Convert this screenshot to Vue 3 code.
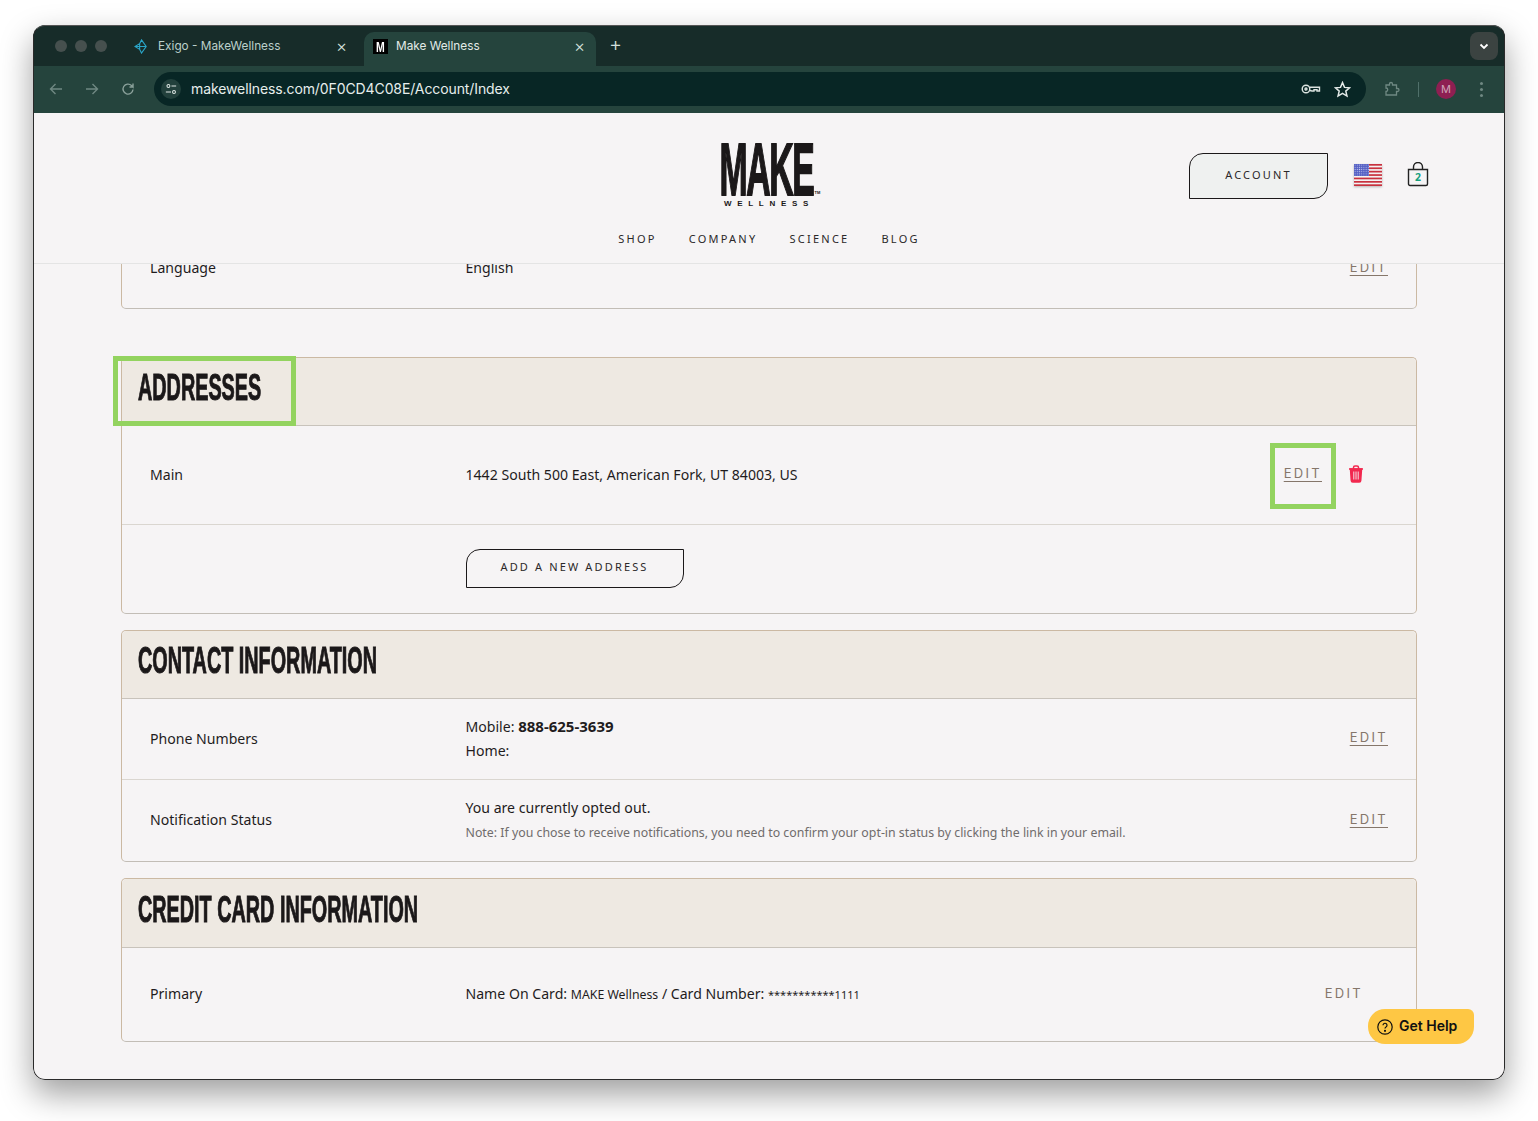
<template>
  <div class="window">
    <div class="tabstrip">
      <div class="lights"><i></i><i></i><i></i></div>
      <div class="tab">
        <svg class="exigo" viewBox="0 0 16 16" width="15" height="15" fill="none" stroke="#2aa5c8" stroke-width="1.2">
          <path d="M8 1 L13 8 L8 15 L6 11 L1 8 L6 5 Z M6 5 V11 M1 8 H13" />
        </svg>
        <span class="tab-title">Exigo - MakeWellness</span>
        <span class="close">×</span>
      </div>
      <div class="tab active">
        <span class="favicon"><b>M</b></span>
        <span class="tab-title">Make Wellness</span>
        <span class="close">×</span>
      </div>
      <span class="plus">+</span>
      <div class="tab-search">
        <svg viewBox="0 0 12 12" width="12" height="12" fill="none" stroke="#fff" stroke-width="1.8"><path d="M2.500 4.500 6 8l3.500-3.500" /></svg>
      </div>
    </div>

    <div class="toolbar">
      <svg class="nav-ic" viewBox="0 0 16 16" width="16" height="16" fill="none" stroke="#6f8882" stroke-width="1.4"><path d="M14 8H2.500M7.500 3 2.500 8l5 5" /></svg>
      <svg class="nav-ic" viewBox="0 0 16 16" width="16" height="16" fill="none" stroke="#6f8882" stroke-width="1.4"><path d="M2 8h11.500M8.500 3l5 5-5 5" /></svg>
      <svg class="nav-ic" viewBox="0 0 16 16" width="16" height="16" fill="none" stroke="#8aa09a" stroke-width="1.400"><path d="M13 8.500A5 5 0 1 1 11.500 4.500L13 6V2.500M13 6H9.500" /></svg>
      <div class="omnibox">
        <span class="site-btn">
          <svg viewBox="0 0 14 14" width="14" height="14" fill="none" stroke="#dfe8e5" stroke-width="1.200"><circle cx="4" cy="3.500" r="1.700" /><path d="M7.500 3.500H13M1 10.500h6" /><circle cx="10.500" cy="10.500" r="1.700" /></svg>
        </span>
        <span class="url">makewellness.com/0F0CD4C08E/Account/Index</span>
        <svg class="omni-ic" viewBox="0 0 20 12" width="20" height="12" fill="none" stroke="#dbe3e0" stroke-width="1.400"><circle cx="5" cy="6" r="3.800" /><circle cx="5" cy="6" r="1" /><path d="M8.800 4.200H18.500V8H16V6.800H13V8H11L8.800 7.500" /></svg>
        <svg class="omni-ic star" viewBox="0 0 16 16" width="17" height="17" fill="none" stroke="#e4eae8" stroke-width="1.400"><path d="M8 1.500 9.900 6l4.800.4-3.600 3.100 1.100 4.700L8 11.700l-4.200 2.500 1.100-4.700L1.300 6.400 6.100 6Z" /></svg>
      </div>
      <svg class="ext" viewBox="0 0 16 16" width="16" height="16" fill="none" stroke="#6f8882" stroke-width="1.300"><path d="M2 4h3.500V3a1.500 1.500 0 0 1 3 0v1H12.500v3.500h1a1.500 1.500 0 0 1 0 3h-1V14H2v-3.500a1.700 1.700 0 0 0 0-3.500Z" /></svg>
      <i class="sep"></i>
      <span class="avatar">M</span>
      <span class="menu"><i></i><i></i><i></i></span>
    </div>

    <div class="page">
      <header class="site-header">
        <div class="logo">
          <span class="logo-make">MAKE</span>
          <span class="logo-tm">TM</span>
          <span class="logo-sub">WELLNESS</span>
        </div>
        <nav class="site-nav">
          <a>SHOP</a><a>COMPANY</a><a>SCIENCE</a><a>BLOG</a>
        </nav>
        <div class="header-tools">
          <button class="btn account">ACCOUNT</button>
          <svg class="flag" viewBox="0 0 28 22" width="28" height="22">
            <defs>
              <pattern id="stars" width="2.200" height="2.200" patternUnits="userSpaceOnUse">
                <circle cx="1.100" cy="1.100" r=".55" fill="#c9cdf0" />
              </pattern>
            </defs>
            <rect width="28" height="22" fill="#f4f1f1" />
            <rect v-for="y in stripes" :key="y" y="0" width="28" height="1.700" :transform="`translate(0 ${y})`" fill="#c8313e" />
            <rect width="15" height="12" fill="#5560c4" />
            <rect width="15" height="12" fill="url(#stars)" />
          </svg>
          <div class="bag">
            <svg viewBox="0 0 22 25" width="22" height="25" fill="none" stroke="#222" stroke-width="1.400"><path d="M1.500 7.500h19V22a1.500 1.500 0 0 1-1.500 1.500H3A1.500 1.500 0 0 1 1.500 22ZM6.500 7.500V5a4.500 4.500 0 0 1 9 0v2.500" /></svg>
            <span class="bag-count">2</span>
          </div>
        </div>
      </header>

      <main class="content">
        <div class="content-inner">
          <section class="card first">
            <div class="row lang">
              <span>Language</span>
              <span>English</span>
              <a class="edit">EDIT</a>
            </div>
          </section>

          <section class="card addresses">
            <div class="card-head">
              <h2>ADDRESSES</h2>
              <i class="mark mark-head"></i>
            </div>
            <div class="row address">
              <span>Main</span>
              <span>1442 South 500 East, American Fork, UT 84003, US</span>
              <div class="actions">
                <a class="edit marked">EDIT<i class="mark mark-edit"></i></a>
                <svg class="trash" viewBox="0 0 16 18" width="16" height="18" fill="none" stroke="#f2284f" stroke-width="1.500">
                  <path d="M1 4h14M5.500 4V2.500a1.500 1.500 0 0 1 1.500-1.500h2a1.500 1.500 0 0 1 1.500 1.500V4" />
                  <path d="M2.500 4 3.300 15.500A1.500 1.500 0 0 0 4.800 17h6.400a1.500 1.500 0 0 0 1.500-1.500L13.500 4Z" fill="#f2284f" />
                  <path d="M5.800 6.500v8M8 6.500v8M10.200 6.500v8" stroke="#f6f4f5" stroke-width=".9" />
                </svg>
              </div>
            </div>
            <div class="row add-row">
              <span></span>
              <button class="btn add">ADD A NEW ADDRESS</button>
            </div>
          </section>

          <section class="card contact">
            <div class="card-head"><h2>CONTACT INFORMATION</h2></div>
            <div class="row phones">
              <span>Phone Numbers</span>
              <div class="stack">
                <span>Mobile: <b>888-625-3639</b></span>
                <span>Home:</span>
              </div>
              <a class="edit">EDIT</a>
            </div>
            <div class="row notify">
              <span>Notification Status</span>
              <div class="stack">
                <span>You are currently opted out.</span>
                <small>Note: If you chose to receive notifications, you need to confirm your opt-in status by clicking the link in your email.</small>
              </div>
              <a class="edit">EDIT</a>
            </div>
          </section>

          <section class="card credit">
            <div class="card-head"><h2>CREDIT CARD INFORMATION</h2></div>
            <div class="row primary">
              <span>Primary</span>
              <span>Name On Card: <em>MAKE Wellness</em> / Card Number: <em class="masked">***********1111</em></span>
              <a class="edit plain">EDIT</a>
            </div>
          </section>
        </div>
      </main>

      <button class="help">
        <svg viewBox="0 0 16 16" width="16" height="16" fill="none" stroke="#111" stroke-width="1.200"><circle cx="8" cy="8" r="7.200" /><path d="M6 6.200a2 2 0 1 1 3 1.800c-.7.400-1 .8-1 1.600" /><circle cx="8" cy="11.800" r=".5" fill="#111" /></svg>
        <span class="help-label">Get Help</span>
      </button>
    </div>
  </div>
</template>

<script setup>
const stripes = [0, 3.4, 6.8, 10.2, 13.6, 17, 20.3]
</script>

<style>
html, body { margin: 0; background: #fff; }
</style>

<style scoped>
.window {
  box-sizing: border-box;
  position: relative;
  width: 1472px;
  height: 1055px;
  margin: 25px 0 41px 33px;
  border-radius: 12px;
  overflow: hidden;
  box-shadow: 0 14px 32px rgba(0, 0, 0, .38);
  display: flex;
  flex-direction: column;
  font-family: "Noto Sans", sans-serif;
  background: #f6f4f5;
}
.window::after {
  content: "";
  position: absolute;
  inset: 0;
  border: 1px solid #2a2a2a;
  border-top-color: #555;
  border-radius: 12px;
  pointer-events: none;
  z-index: 5;
}
.tabstrip {
  height: 41px;
  flex: none;
  background: #172c29;
  display: flex;
  align-items: flex-end;
  position: relative;
  font-family: "Inter", sans-serif;
}
.lights { display: flex; gap: 8px; padding: 0 0 14px 22px; width: 75px; }
.lights i { width: 12px; height: 12px; border-radius: 50%; background: #46504e; flex: none; }
.tab {
  width: 234px;
  height: 34px;
  box-sizing: border-box;
  display: flex;
  align-items: center;
  gap: 9px;
  padding: 0 17px 6px 4px;
  color: #bcd0cb;
  font-size: 11.800px;
  border-radius: 10px 10px 0 0;
}
.tab.active { width: 232px; padding: 0 11px 6px 9px; gap: 8px; background: #25443d; color: #e2ebe8; }
.exigo { flex: none; }
.favicon {
  width: 15px; height: 15px; background: #000; color: #fff; flex: none;
  display: flex; align-items: center; justify-content: center;
  font: bold 15px "Liberation Sans Narrow", "Liberation Sans", sans-serif;
}
.favicon b { transform: scaleX(.7); }
.tab-title { flex: 1; white-space: nowrap; }
.close { font-size: 17px; line-height: 1; font-weight: 300; color: #d5e0dd; }
.plus { color: #d5e0dd; font-size: 20px; line-height: 28px; padding-bottom: 8px; margin-left: 13px; font-weight: 300; }
.tab-search {
  position: absolute; right: 7px; top: 7px; width: 28px; height: 28px; border-radius: 8px;
  background: #3b4341; display: flex; align-items: center; justify-content: center;
}
.toolbar {
  height: 47px;
  flex: none;
  background: #25443d;
  display: flex;
  align-items: center;
  padding: 0 0 1px 15px;
  box-sizing: border-box;
}
.nav-ic { flex: none; margin-right: 20px; }
.omnibox {
  width: 1212px;
  height: 34px;
  flex: none;
  margin-left: -2px;
  border-radius: 17px;
  background: #082625;
  display: flex;
  align-items: center;
  padding: 0 15px 0 7px;
  box-sizing: border-box;
}
.site-btn {
  width: 20px; height: 20px; border-radius: 50%; background: #22403c;
  display: flex; align-items: center; justify-content: center; margin-right: 10px;
}
.site-btn svg { width: 12px; height: 12px; }
.url { flex: 1; color: #e6eeec; font-size: 14px; font-family: "Inter", sans-serif; letter-spacing: -.1px; padding-bottom: 2px; }
.omni-ic { flex: none; }
.star { margin-left: 13px; }
.ext { margin-left: 18px; flex: none; }
.sep { width: 1px; height: 15px; background: #50706a; margin-left: 18px; }
.avatar {
  width: 20px; height: 20px; border-radius: 50%; background: #8e1f52; color: #cfa5b8;
  font: 11px/20px "Inter", sans-serif; text-align: center; margin-left: 17px; flex: none;
}
.menu { display: flex; flex-direction: column; gap: 3px; margin-left: 24px; }
.menu i { width: 3px; height: 3px; border-radius: 50%; background: #6f8882; }

.page { flex: 1; min-height: 0; display: flex; flex-direction: column; position: relative; }
.site-header {
  height: 151px;
  flex: none;
  box-sizing: border-box;
  border-bottom: 1px solid #e4e4e4;
  position: relative;
  display: flex;
  flex-direction: column;
  align-items: center;
  padding-top: 30px;
  background: #f6f4f5;
  z-index: 2;
  color: #1b1819;
}
.logo { display: flex; flex-direction: column; align-items: center; height: 65px; margin-left: -5px; position: relative; }
.logo-make {
  font: bold 75px/52px "Liberation Sans", sans-serif;
  height: 52px;
  transform: scaleX(.45);
  letter-spacing: -3px;
  -webkit-text-stroke: 1.800px #1b1819;
}
.logo-tm {
  position: absolute;
  left: calc(50% + 48px);
  top: 47px;
  font: bold 4px/5px "Liberation Sans", sans-serif;
}
.logo-sub { font: bold 8px/10px "Liberation Sans", sans-serif; letter-spacing: 5.700px; margin-top: 4px; padding-left: 5px; }
.site-nav {
  display: flex;
  gap: 32px;
  margin-top: 23px;
  font-size: 11px;
  line-height: 16px;
  letter-spacing: 2.250px;
  color: #2b2829;
}
.header-tools {
  position: absolute;
  left: 1156px;
  top: 40px;
  display: flex;
  align-items: center;
}
.btn {
  font-family: "Noto Sans", sans-serif;
  font-size: 11px;
  letter-spacing: 2.150px;
  color: #2b2829;
  border: 1px solid #1b1819;
  border-radius: 14px 0 14px 0;
  background: transparent;
  padding: 0 0 3px;
}
.account { width: 139px; height: 46px; background: #eff1f0; }
.flag { margin: 0 0 3px 26px; filter: drop-shadow(0 1px 1px rgba(0,0,0,.25)); }
.bag { position: relative; margin: 0 0 4px 25px; width: 22px; height: 25px; }
.bag-count {
  position: absolute; left: 0; right: 0; top: 9px; text-align: center;
  font: bold 10.500px/12px "Noto Sans", sans-serif; color: #16a07d;
}
.content { flex: 1; min-height: 0; overflow: hidden; }
.content-inner { margin-top: -100px; display: flex; flex-direction: column; align-items: center; }
.card {
  width: 1296px;
  box-sizing: border-box;
  border: 1px solid #cbb9a3;
  border-bottom-color: #c2bdb6;
  border-radius: 5px;
  margin-top: 16px;
}
.card.first { margin-top: 0; height: 145px; display: flex; align-items: flex-end; padding-bottom: 29px; }
.card.first .row { flex: 1; height: auto; }
.card.addresses { margin-top: 48px; }
.card-head {
  height: 68px;
  box-sizing: border-box;
  background: #eee9e2;
  border-bottom: 1px solid #c8c3bb;
  border-radius: 5px 5px 0 0;
  padding: 0 0 7px 16px;
  position: relative;
  display: flex;
  align-items: center;
}
.credit .card-head { height: 69px; }
h2 {
  margin: 0;
  font: bold 36px/1 "Liberation Sans Narrow", "Liberation Sans", sans-serif;
  color: #1b1819;
  transform: scaleX(.55);
  transform-origin: left center;
  -webkit-text-stroke: 1px #1b1819;
  white-space: nowrap;
}
.mark { position: absolute; border: 5px solid #93d35f; box-sizing: border-box; pointer-events: none; }
.mark-head { left: -9px; top: -2px; width: 183px; height: 70px; }
.row {
  display: grid;
  grid-template-columns: 315.500px 1fr auto;
  align-items: center;
  box-sizing: border-box;
  padding: 0 28px 2px;
  font-size: 14.100px;
  color: #1f1c1d;
  border-bottom: 1px solid #dad6d0;
}
.row:last-child { border-bottom: none; }
.address { height: 99px; }
.add-row { height: 88px; }
.phones { height: 81px; }
.notify { height: 81px; }
.primary { height: 93px; }
.stack { display: flex; flex-direction: column; gap: 4px; line-height: 20px; }
.stack small { font-size: 12.350px; color: #706c6c; line-height: 20px; position: relative; top: 1px; }
.stack b { font-size: 15px; }
em { font-style: normal; font-size: 12.300px; }
em.masked { font-size: 11px; }
.edit {
  font: 13px "Inter", sans-serif;
  letter-spacing: 2.300px;
  color: #85766a;
  text-decoration: underline;
  text-underline-offset: 3px;
  position: relative;
  top: -1px;
}
.edit.plain { text-decoration: none; margin-right: 25px; }
.actions { display: flex; align-items: center; padding-right: 24px; }
.marked { display: block; }
.mark-edit { left: -14px; top: -22px; width: 66px; height: 66px; }
.trash { margin-left: 26px; }
.add { width: 218px; height: 39px; background: transparent; }
.help {
  position: absolute;
  left: 1335px;
  top: 896px;
  width: 106px;
  height: 35px;
  box-sizing: border-box;
  padding: 0 0 0 9px;
  border: 0;
  border-radius: 17px 6px 17px 17px;
  background: #fec744;
  display: flex;
  align-items: center;
  gap: 6px;
  font: 600 14px "Inter", sans-serif;
  color: #111;
  z-index: 3;
}
.help-label { position: relative; top: -1px; }
</style>
